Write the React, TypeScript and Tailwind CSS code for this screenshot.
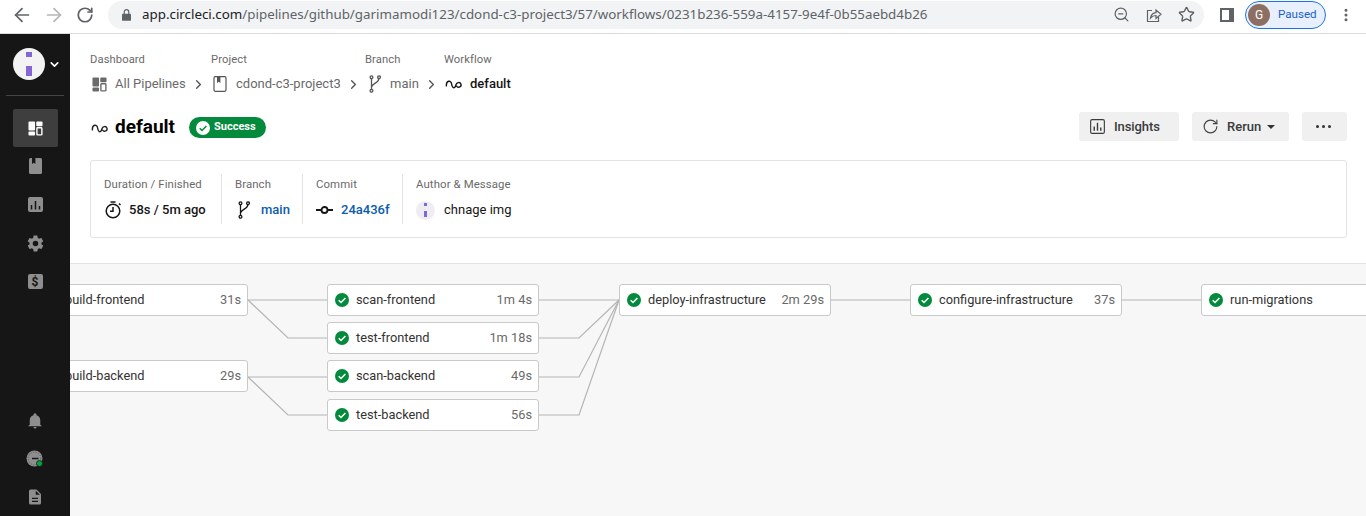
import { ArrowLeft, ArrowRight, RotateCw, ZoomOut, Star, MoreVertical, ChevronDown, ChevronRight, RotateCw as Rerun } from 'lucide-react';

const FONT = "font-['Roboto',sans-serif]";

// circleci dashboard glyph: four blocks, bottom-right one outlined
function DashIcon({ className = '' }: { className?: string }) {
  return (
    <svg viewBox="0 0 16 16" className={className} fill="currentColor">
      <rect x="0.5" y="0.5" width="7" height="9.5" rx="1" />
      <rect x="8.8" y="0.5" width="6.7" height="5" rx="1" />
      <rect x="0.5" y="11.2" width="7" height="4.3" rx="1" />
      <rect x="9.5" y="7.2" width="5.3" height="7.6" rx="0.8" fill="none" stroke="currentColor" strokeWidth="1.5" />
    </svg>
  );
}

function ProjectIcon({ className = '' }: { className?: string }) {
  return (
    <svg viewBox="0 0 14 16" className={className} fill="none" stroke="currentColor">
      <rect x="1" y="0.7" width="12" height="14.6" rx="1.2" strokeWidth="1.2" />
      <path d="M4 1v6l1.7-1.3L7.4 7V1z" fill="currentColor" stroke="none" />
    </svg>
  );
}

function BranchIcon({ className = '' }: { className?: string }) {
  return (
    <svg viewBox="0 0 12 18" className={className} fill="none" stroke="currentColor" strokeWidth="1.3">
      <circle cx="2.5" cy="2.2" r="1.4" />
      <circle cx="2.5" cy="15.8" r="1.4" />
      <circle cx="10" cy="2.2" r="1.4" />
      <path d="M2.5 3.6v10.8M2.6 12c.3-3.5 6.9-3.8 7.4-8.4" />
    </svg>
  );
}

function WorkflowIcon({ className = '' }: { className?: string }) {
  return (
    <svg viewBox="0 0 18 12" className={className} fill="none" stroke="currentColor" strokeWidth="1.5" strokeLinecap="round">
      <path d="M1.500 8C1 2 6.500 1.500 7 6c.3 3.500 2.500 5.500 4 2.500.5-1.700 1-4 3-4a2.500 2.500 0 1 1-1.500 4" />
    </svg>
  );
}

function CheckBadge({ className = '' }: { className?: string }) {
  return (
    <svg viewBox="0 0 14 14" className={className}>
      <circle cx="7" cy="7" r="7" fill="#038a3c" />
      <path d="M3.700 7.200l2.300 2.300 4.400-4.600" fill="none" stroke="#fff" strokeWidth="1.500" />
    </svg>
  );
}

function OrgLogo({ size, tone }: { size: string; tone: string }) {
  return (
    <div className={`${size} ${tone} rounded-full flex flex-col items-center justify-center`}>
      <div className="w-[16%] h-[16%] bg-[#8467d7]" />
      <div className="w-[16%] h-[30%]" />
      <div className="w-[16%] h-[31%] bg-[#8467d7]" />
    </div>
  );
}

function ChromeBar() {
  return (
    <div className="h-[34px] shrink-0 bg-white border-b border-[#dadce0] flex items-center text-[#5f6368]">
      <ArrowLeft size={22} strokeWidth={1.9} className="ml-[11px] -mt-[4px]" />
      <ArrowRight size={22} strokeWidth={1.9} className="ml-[10px] -mt-[4px] text-[#b4b6b9]" />
      <RotateCw size={18} strokeWidth={2.3} className="ml-[11px] -mt-[4px]" />
      <div className="ml-[14px] h-[28px] w-[1096px] -mt-[4px] bg-[#f1f3f4] rounded-full flex items-center">
        <svg viewBox="0 0 10 13" className="ml-[14px] w-[9px] h-[12px]" fill="#5f6368">
          <path d="M1 5h8a1 1 0 0 1 1 1v6a1 1 0 0 1-1 1H1a1 1 0 0 1-1-1V6a1 1 0 0 1 1-1z" />
          <path d="M2.500 5.500V3a2.500 2.500 0 0 1 5 0v2.500" fill="none" stroke="#5f6368" strokeWidth="1.300" />
        </svg>
        <span className="ml-[11px] font-['Noto_Sans',sans-serif] text-[13.35px] text-[#5f6368] whitespace-nowrap">
          <span className="text-[#202124]">app.circleci.com</span>/pipelines/github/garimamodi123/cdond-c3-project3/57/workflows/0231b236-559a-4157-9e4f-0b55aebd4b26
        </span>
        <div className="ml-auto flex items-center gap-[16px] mr-[9px]">
          <ZoomOut size={17} strokeWidth={1.7} />
          <svg viewBox="0 0 16 16" className="w-[16px] h-[16px]" fill="none" stroke="#5f6368" strokeWidth="1.200">
            <path d="M6 3.500H1.500v11h11V10" />
            <path d="M4.500 11C5 7.500 7.500 5.800 10 5.600V3l5 4.200-5 4.200V8.500c-2 0-4 .7-5.500 2.500z" />
          </svg>
          <Star size={17} strokeWidth={2} />
        </div>
      </div>
      <div className="ml-[16px] -mt-[4px] w-[14px] h-[14px] border-2 border-r-[5px] border-[#5f6368] bg-white" />
      <div className="ml-[11px] -mt-[4px] h-[28px] w-[81px] rounded-full border border-[#1a73e8] bg-[#e8f0fe] flex items-center">
        <div className="ml-[2px] w-[22px] h-[22px] rounded-full bg-[#8d6e63] text-white text-[12px] flex items-center justify-center font-['Roboto',sans-serif]">G</div>
        <span className="ml-[8px] text-[11.6px] text-[#1a5fd0] font-['Roboto',sans-serif]">Paused</span>
      </div>
      <MoreVertical size={16} strokeWidth={2.5} className="ml-[12px] -mt-[4px]" />
    </div>
  );
}

function Sidebar() {
  return (
    <div className="w-[70px] shrink-0 bg-[#161616] flex flex-col items-center text-[#8e8e8e]">
      <div className="w-full flex items-center pl-[13px] pt-[14px]">
        <OrgLogo size="w-[32px] h-[32px]" tone="bg-[#f3f3f3]" />
        <ChevronDown size={13} strokeWidth={3} className="ml-[3px] text-white" />
      </div>
      <div className="w-[58px] border-t border-[#444] mt-[15px]" />
      <div className="mt-[13px] w-[45px] h-[38px] bg-[#3e3e3e] rounded-[2px] flex items-center justify-center text-white">
        <DashIcon className="w-[15px] h-[15px]" />
      </div>
      <div className="mt-[11px] flex flex-col items-center gap-[22.5px]">
        <div className="h-[16px] flex items-center">
          <svg viewBox="0 0 13 16" className="w-[13px] h-[16px]">
            <rect width="13" height="16" rx="1.500" fill="#8e8e8e" />
            <path d="M3 0v6l1.700-1.200L6.400 6V0z" fill="#161616" />
          </svg>
        </div>
        <div className="h-[16px] flex items-center">
          <svg viewBox="0 0 15 15" className="w-[15px] h-[15px]">
            <rect width="15" height="15" rx="2" fill="#8e8e8e" />
            <path d="M3.500 8v4.500M7.500 4v8.500M11.500 9v3.500" stroke="#161616" strokeWidth="1.500" />
          </svg>
        </div>
        <div className="h-[16px] flex items-center">
          <svg viewBox="0 0 24 24" className="w-[19px] h-[19px]" fill="#8e8e8e">
            <path d="M19.430 12.980c.040-.320.070-.640.070-.980s-.030-.660-.070-.980l2.110-1.650c.190-.150.240-.420.120-.640l-2-3.460c-.120-.220-.390-.300-.610-.220l-2.490 1c-.520-.400-1.080-.730-1.690-.980l-.380-2.650A.488.488 0 0 0 14 2h-4c-.250 0-.460.180-.490.420l-.380 2.650c-.610.250-1.170.590-1.690.980l-2.490-1c-.230-.090-.490 0-.610.220l-2 3.460c-.130.220-.070.490.120.640l2.110 1.650c-.040.320-.070.650-.070.980s.030.660.070.980l-2.110 1.650c-.190.150-.240.420-.120.640l2 3.460c.120.220.390.300.610.220l2.490-1c.520.400 1.080.730 1.690.980l.380 2.650c.030.240.240.420.490.420h4c.250 0 .460-.180.490-.420l.380-2.650c.610-.250 1.170-.590 1.690-.980l2.490 1c.230.090.490 0 .610-.220l2-3.460c.120-.220.070-.490-.120-.640l-2.110-1.650zM12 15.500a3.500 3.500 0 1 1 0-7 3.500 3.500 0 0 1 0 7z" />
          </svg>
        </div>
        <div className="h-[16px] flex items-center">
          <div className="w-[15px] h-[15px] bg-[#8e8e8e] rounded-[2px] flex items-center justify-center text-[#161616] text-[12px] font-bold leading-none font-['Roboto',sans-serif]">$</div>
        </div>
      </div>
      <div className="mt-auto mb-[10px] flex flex-col items-center gap-[20px]">
        <svg viewBox="0 0 24 24" className="w-[18px] h-[18px]" fill="#8e8e8e">
          <path d="M12 22a2 2 0 0 0 2-2h-4a2 2 0 0 0 2 2zm7-5v-6c0-3.300-1.800-6-5-6.800V3.500a2 2 0 0 0-4 0v.700C6.800 5 5 7.700 5 11v6l-2 1.500V19h18v-.500z" />
        </svg>
        <svg viewBox="0 0 18 18" className="w-[18px] h-[18px]">
          <circle cx="8.500" cy="8.500" r="8" fill="#8e8e8e" />
          <circle cx="8.500" cy="8.500" r="6.300" fill="none" stroke="#5c5c5c" strokeWidth="1" strokeDasharray="1 1.500" />
          <path d="M6 8.500h6.500" stroke="#161616" strokeWidth="1.500" />
          <circle cx="13.500" cy="13.500" r="3" fill="#08a045" stroke="#161616" strokeWidth="0.800" />
        </svg>
        <svg viewBox="0 0 24 24" className="w-[18px] h-[18px]" fill="#8e8e8e">
          <path d="M14 2H6a2 2 0 0 0-2 2v16a2 2 0 0 0 2 2h12a2 2 0 0 0 2-2V8zm-1 7V3.500L18.500 9zM8 13h8v1.700H8zm0 4h8v1.700H8z" />
        </svg>
      </div>
    </div>
  );
}

function Crumb({ label, width, icon, text, dark }: { label: string; width: string; icon: React.ReactNode; text: string; dark?: boolean }) {
  return (
    <div className={`${width} shrink-0`}>
      <div className="text-[11.2px] leading-[14px] text-[#6a6a6a] tracking-[0.1px]">{label}</div>
      <div className={`mt-[7px] h-[20px] flex items-center text-[13px] ${dark ? 'text-[#161616] font-medium' : 'text-[#6a6a6a]'}`}>
        {icon}
        <span>{text}</span>
        {!dark && <ChevronRight size={15} strokeWidth={2.2} className="ml-[5px] text-[#555]" />}
      </div>
    </div>
  );
}

function Button({ children, width }: { children: React.ReactNode; width: string }) {
  return (
    <div className={`${width} h-[29px] bg-[#f0f0f0] rounded-[3px] flex items-center text-[13px] font-medium text-[#3b3b3b]`}>
      {children}
    </div>
  );
}

function Meta({ label, width, children, last }: { label: string; width: string; children: React.ReactNode; last?: boolean }) {
  return (
    <div className={`${width} h-[50px] pl-[13px] ${last ? '' : 'border-r border-[#e3e3e3]'}`}>
      <div className="text-[11.4px] leading-[14px] pt-[3px] text-[#6a6a6a] tracking-[0.1px]">{label}</div>
      <div className="mt-[9px] flex items-center h-[20px] text-[13px] text-[#161616]">{children}</div>
    </div>
  );
}

type Job = { name: string; time?: string; x: number; y: number; clip?: boolean };

const JOBS: Job[] = [
  { name: 'build-frontend', time: '31s', x: 36, y: 284, clip: true },
  { name: 'build-backend', time: '29s', x: 36, y: 360, clip: true },
  { name: 'scan-frontend', time: '1m 4s', x: 327, y: 284 },
  { name: 'test-frontend', time: '1m 18s', x: 327, y: 322 },
  { name: 'scan-backend', time: '49s', x: 327, y: 360 },
  { name: 'test-backend', time: '56s', x: 327, y: 399 },
  { name: 'deploy-infrastructure', time: '2m 29s', x: 619, y: 284 },
  { name: 'configure-infrastructure', time: '37s', x: 910, y: 284 },
  { name: 'run-migrations', x: 1201, y: 284 },
];

const LINES = [
  'M248 300H327', 'M248 300L288 338H327', 'M248 377H327', 'M248 377L288 415H327',
  'M539 300H619', 'M539 338H579L619 300', 'M539 377H579L619 300', 'M539 415H579L619 300',
  'M831 300H910', 'M1122 300H1201',
];

function Graph() {
  return (
    <div className="relative flex-1 overflow-hidden bg-[#f7f7f7] border-t border-[#e3e3e3]">
      <svg className="absolute left-0 top-0" width="1296" height="252" viewBox="70 264 1296 252" fill="none" stroke="#b5b5b5" strokeWidth="1.200">
        {LINES.map((d) => (
          <path key={d} d={d} />
        ))}
      </svg>
      {JOBS.map((j) => (
        <div
          key={j.name}
          className="absolute w-[212px] h-[32px] bg-white border border-[#c9c9c9] rounded-[3px] flex items-center pr-[6px] text-[12.8px] text-[#333]"
          style={{ left: j.x - 70, top: j.y - 264 }}
        >
          {!j.clip && <CheckBadge className="ml-[7px] w-[14px] h-[14px] shrink-0" />}
          {j.clip && <span className="ml-[7px] w-[14px] shrink-0" />}
          <span className="ml-[7px]">{j.name}</span>
          {j.time && <span className="ml-auto text-[#6a6a6a]">{j.time}</span>}
        </div>
      ))}
    </div>
  );
}

export default function App() {
  return (
    <div className={`w-[1366px] h-[516px] overflow-hidden flex flex-col bg-white ${FONT}`}>
      <ChromeBar />
      <div className="flex flex-1 min-h-0">
        <Sidebar />
        <div className="flex-1 min-w-0 flex flex-col">
          <div className="h-[229px] shrink-0 pl-[20px] pr-[19px]">
            <div className="flex pt-[19px]">
              <Crumb label="Dashboard" width="w-[121px]" text="All Pipelines" icon={<DashIcon className="w-[15px] h-[15px] mr-[8px] ml-[2px] text-[#6a6a6a]" />} />
              <Crumb label="Project" width="w-[154px]" text="cdond-c3-project3" icon={<ProjectIcon className="w-[14px] h-[16px] mr-[9px] ml-[2px] text-[#555]" />} />
              <Crumb label="Branch" width="w-[79px]" text="main" icon={<BranchIcon className="w-[12px] h-[18px] mr-[9px] ml-[4px] text-[#555]" />} />
              <Crumb label="Workflow" width="w-[80px]" text="default" dark icon={<WorkflowIcon className="w-[17px] h-[12px] mr-[8px] ml-[1px] text-[#161616]" />} />
            </div>
            <div className="flex items-center mt-[18px] h-[29px]">
              <div className="flex items-center h-full pt-[2px]">
                <WorkflowIcon className="w-[17px] h-[12px] ml-[1px] text-[#222]" />
                <span className="ml-[7px] text-[19px] font-bold text-black">default</span>
                <div className="ml-[14px] h-[21px] w-[77px] rounded-full bg-[#038a3c] flex items-center text-white text-[11px] font-bold">
                  <svg viewBox="0 0 14 14" className="ml-[7px] w-[14px] h-[14px]">
                    <circle cx="7" cy="7" r="7" fill="#fff" />
                    <path d="M3.700 7.200l2.300 2.300 4.400-4.600" fill="none" stroke="#038a3c" strokeWidth="1.500" />
                  </svg>
                  <span className="ml-[4px]">Success</span>
                </div>
              </div>
              <div className="ml-auto flex gap-[13px]">
                <Button width="w-[100px]">
                  <svg viewBox="0 0 16 16" className="ml-[11px] w-[15px] h-[15px] mr-[9px]" fill="none" stroke="#3b3b3b">
                    <rect x="0.700" y="0.700" width="14.600" height="14.600" rx="1.500" strokeWidth="1.200" />
                    <path d="M4.500 8v4.500M8 4v8.500M11.500 9v3.500" strokeWidth="1.500" />
                  </svg>
                  <span className="tracking-[-0.1px]">Insights</span>
                </Button>
                <Button width="w-[97px]">
                  <Rerun size={17} strokeWidth={1.6} className="ml-[10px] mr-[8px] text-[#444]" />
                  Rerun
                  <span className="ml-[6px] border-x-[4px] border-x-transparent border-t-[4px] border-t-[#333]" />
                </Button>
                <Button width="w-[45px]">
                  <span className="ml-[14px] flex gap-[3px]">
                    <span className="w-[3px] h-[3px] rounded-full bg-[#333]" />
                    <span className="w-[3px] h-[3px] rounded-full bg-[#333]" />
                    <span className="w-[3px] h-[3px] rounded-full bg-[#333]" />
                  </span>
                </Button>
              </div>
            </div>
            <div className="mt-[19px] h-[78px] border border-[#e3e3e3] rounded-[3px] flex items-center">
              <Meta label="Duration / Finished" width="w-[131px]">
                <svg viewBox="0 0 18 18" className="w-[18px] h-[18px] mr-[7px]" fill="none" stroke="#161616" strokeWidth="1.500">
                  <circle cx="9" cy="10" r="6.800" />
                  <path d="M9 6v4.200H6M6.500 1h5M15 2.500l1.500 1.500" />
                </svg>
                <span className="font-medium">58s / 5m ago</span>
              </Meta>
              <Meta label="Branch" width="w-[81px]">
                <BranchIcon className="w-[12px] h-[18px] mr-[11px] ml-[3px] text-[#161616]" />
                <span className="font-medium text-[#0b5cad]">main</span>
              </Meta>
              <Meta label="Commit" width="w-[100px]">
                <svg viewBox="0 0 17 8" className="w-[17px] h-[8px] mr-[8px]" fill="none" stroke="#161616" strokeWidth="1.800">
                  <circle cx="8.500" cy="4" r="3" />
                  <path d="M0 4h5.500M11.500 4H17" />
                </svg>
                <span className="font-medium text-[#0b5cad]">24a436f</span>
              </Meta>
              <Meta label="Author & Message" width="w-[140px]" last>
                <OrgLogo size="w-[19px] h-[19px]" tone="bg-[#eeeef2]" />
                <span className="ml-[9px]">chnage img</span>
              </Meta>
            </div>
          </div>
          <Graph />
        </div>
      </div>
    </div>
  );
}
